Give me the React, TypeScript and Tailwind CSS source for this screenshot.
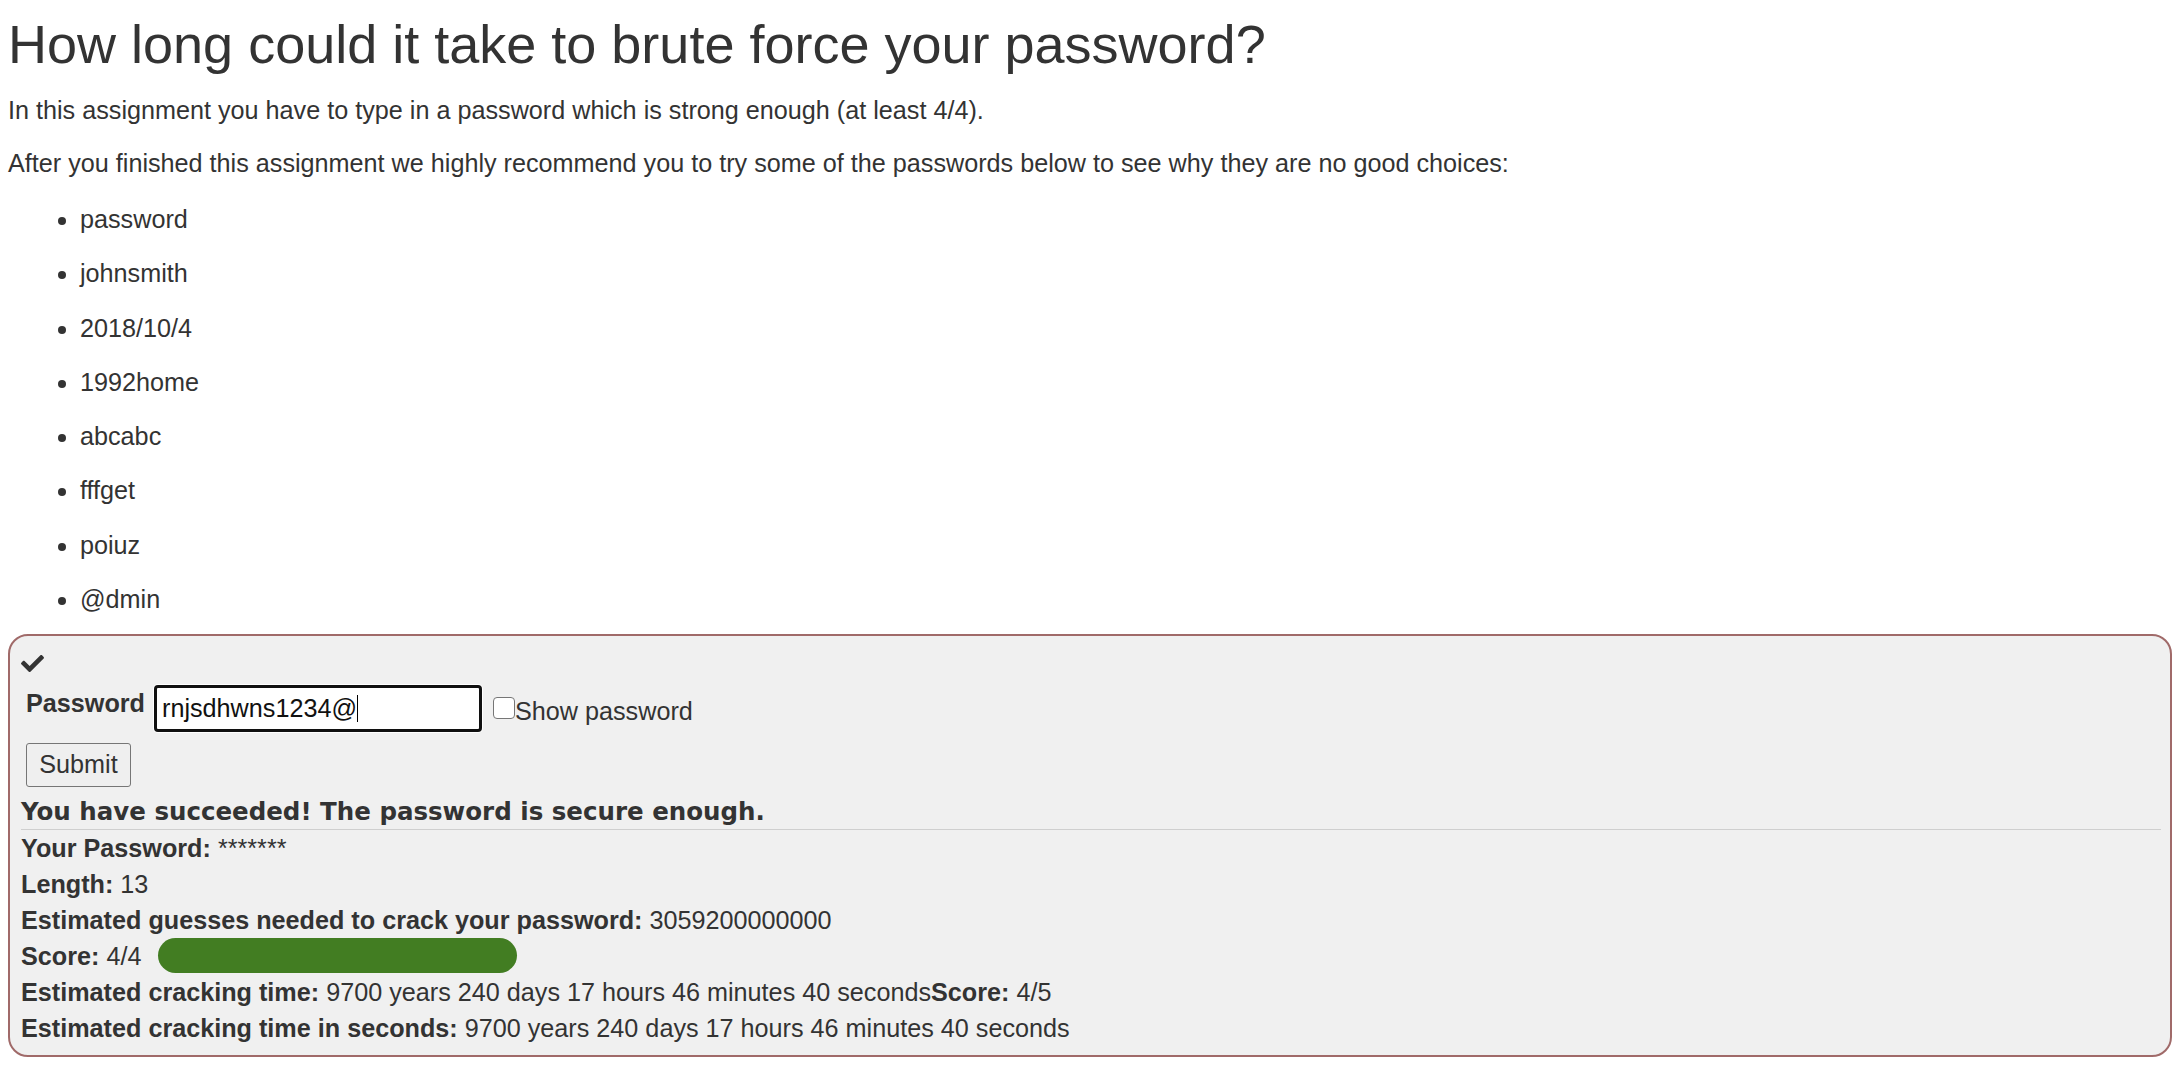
import { FaCheck } from 'react-icons/fa';

const badPasswords = ['password', 'johnsmith', '2018/10/4', '1992home', 'abcabc', 'fffget', 'poiuz', '@dmin'];

export default function App() {
  return (
    <div className="min-h-screen bg-white pt-[15px] pl-[8px] pr-[12px] text-[#333] font-['Liberation_Sans',Arial,sans-serif] text-[25.2px] leading-[35px]">
      <h1 className="text-[54px] leading-[59px] font-normal">How long could it take to brute force your password?</h1>
      <p className="mt-[19px]">In this assignment you have to type in a password which is strong enough (at least 4/4).</p>
      <p className="mt-[18px]">
        After you finished this assignment we highly recommend you to try some of the passwords below to see why they are no good choices:
      </p>
      <ul className="mt-[21px] list-disc pl-[72px] space-y-[19.3px]">
        {badPasswords.map((pw) => (
          <li key={pw}>{pw}</li>
        ))}
      </ul>

      <div className="mt-[16.5px] border-[2.5px] border-[#a06a69] rounded-[20px] bg-[#f0f0f0] pt-[10px] pl-[11px] pr-[9px] pb-[9px]">
        <div className="h-[35px] flex items-center">
          <FaCheck size={23} color="#333" />
        </div>

        <div className="ml-[5px] mt-[4px]">
          <div className="flex items-start h-[47px]">
            <label className="font-bold mt-[1px]">Password</label>
            <div className="ml-[9px] w-[328px] h-[47px] border-[3px] border-[#101010] rounded-[4px] bg-white pl-[5px] flex items-center shadow-[0_0_0_1px_#ffffff] text-[#111]">
              <span>rnjsdhwns1234@</span>
              <span className="inline-block w-[1px] h-[27px] bg-black" />
            </div>
            <span className="ml-[11px] mt-[12px] w-[22px] h-[22px] border border-[#767676] rounded-[4px] bg-white" />
            <span className="mt-[9px]">Show password</span>
          </div>
          <button className="mt-[11px] h-[44px] w-[105px] border border-[#767676] rounded-[3px] bg-[#efefef] text-[#333] leading-[35px]">
            Submit
          </button>
        </div>

        <div className="mt-[8px] font-['DejaVu_Sans',Verdana,sans-serif] font-bold text-[24.5px] leading-[34px] border-b border-[#cfcfcf]">
          You have succeeded! The password is secure enough.
        </div>

        <div className="leading-[36px]">
          <div>
            <b>Your Password:</b> *******
          </div>
          <div>
            <b>Length:</b> 13
          </div>
          <div>
            <b>Estimated guesses needed to crack your password:</b> 3059200000000
          </div>
          <div className="flex items-center h-[36px]">
            <span>
              <b>Score:</b> 4/4
            </span>
            <div className="ml-[17px] w-[359px] h-[35px] rounded-full bg-[#427d22]" />
          </div>
          <div>
            <b>Estimated cracking time:</b> 9700 years 240 days 17 hours 46 minutes 40 seconds<b>Score:</b> 4/5
          </div>
          <div>
            <b>Estimated cracking time in seconds:</b> 9700 years 240 days 17 hours 46 minutes 40 seconds
          </div>
        </div>
      </div>
    </div>
  );
}
